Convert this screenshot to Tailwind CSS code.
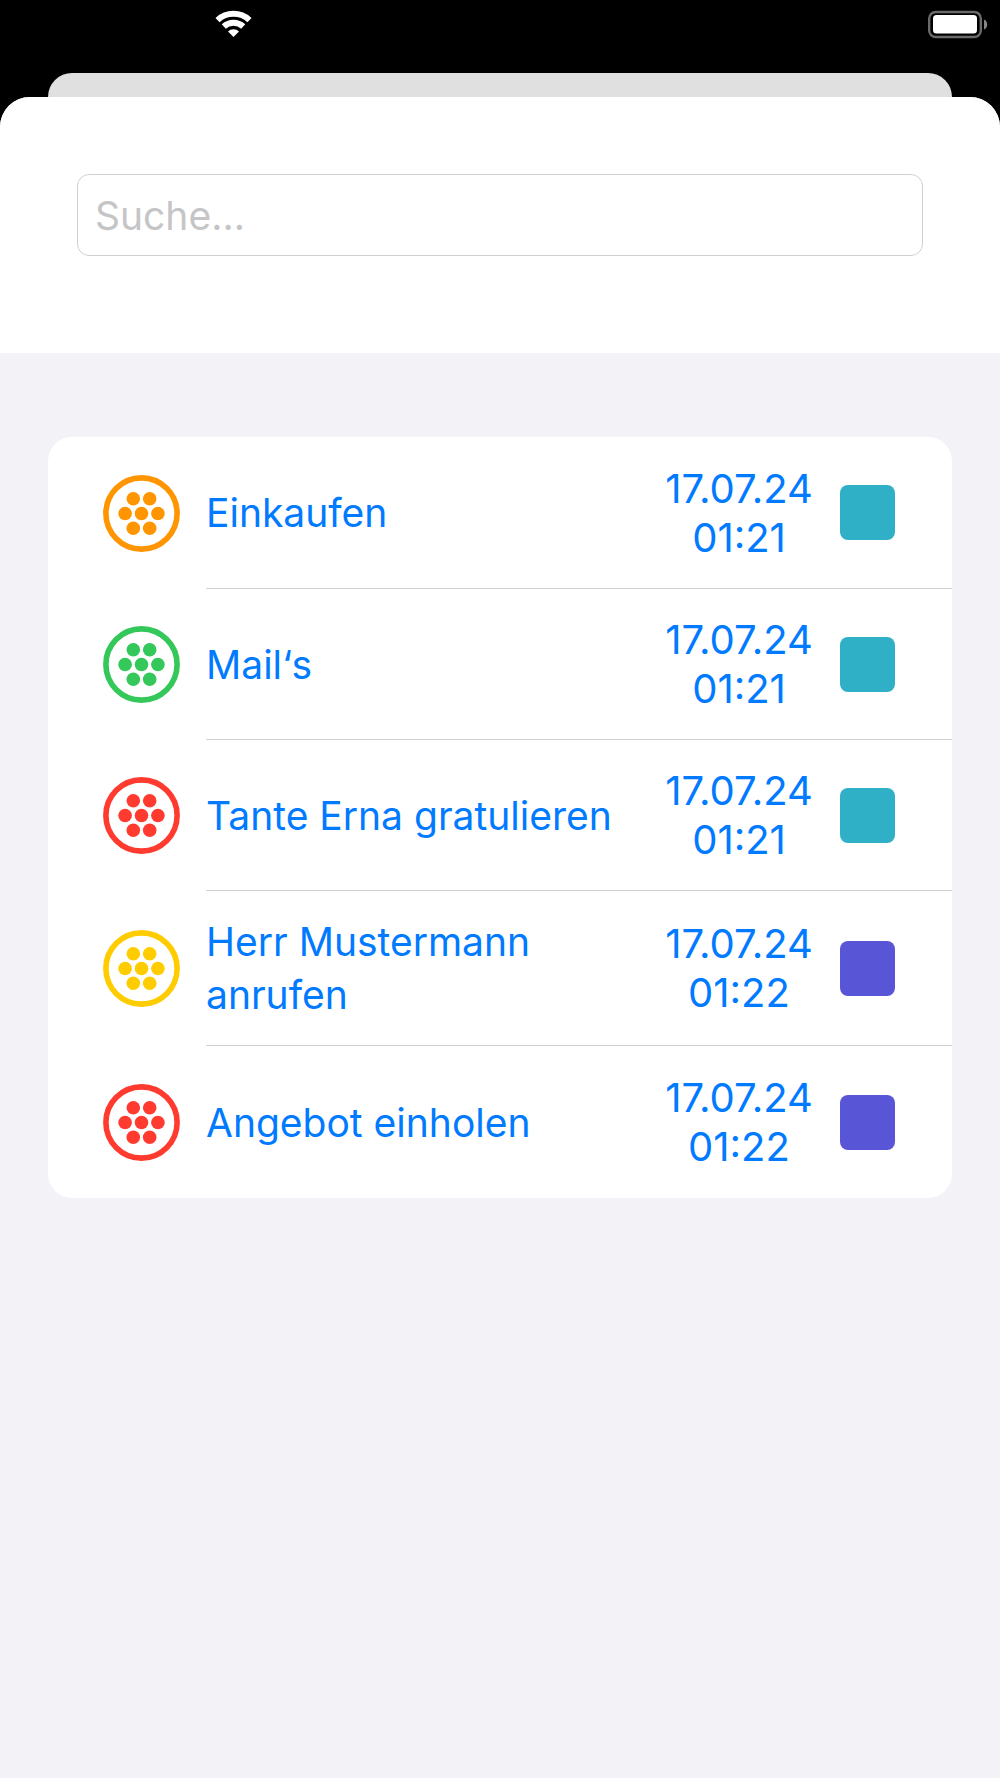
<!DOCTYPE html>
<html lang="de">
<head>
    <meta charset="UTF-8">
    <meta name="viewport" content="width=device-width, initial-scale=1.0">
    <title>Suche</title>
    <script src="https://cdn.jsdelivr.net/npm/@tailwindcss/browser@4"></script>
</head>
<body class="min-h-screen flex flex-col bg-black font-['Inter','Liberation_Sans',sans-serif] text-[39px]">

    <!-- dot icon shared by all rows, takes the row's colour -->
    <svg class="hidden">
        <symbol id="dots" viewBox="0 0 77 77">
            <circle cx="38.5" cy="38.5" r="35.6" fill="none" stroke="currentColor" stroke-width="5.6"/>
            <g fill="currentColor">
                <circle cx="30.3" cy="23.7" r="6.8"/>
                <circle cx="46.7" cy="23.7" r="6.8"/>
                <circle cx="22.1" cy="38.5" r="6.8"/>
                <circle cx="38.5" cy="38.5" r="6.8"/>
                <circle cx="54.9" cy="38.5" r="6.8"/>
                <circle cx="30.3" cy="53.3" r="6.8"/>
                <circle cx="46.7" cy="53.3" r="6.8"/>
            </g>
        </symbol>
    </svg>

    <header class="h-[73px] pt-[10px] pl-[215px] pr-3 flex items-start justify-between">
        <svg class="w-[37px] h-[28px]" viewBox="0 0 37 28" role="img" aria-label="WLAN">
            <g fill="none" stroke="#fff" stroke-width="6">
                <path d="M2.5 10.1 A23.5 23.5 0 0 1 34.5 10.1"/>
                <path d="M8.8 16.5 A14.2 14.2 0 0 1 28.2 16.5"/>
            </g>
            <path d="M18.5 27 L13 21.6 A7.6 7.6 0 0 1 24 21.6 Z" fill="#fff"/>
        </svg>
        <svg class="w-[60px] h-[29px]" viewBox="0 0 60 29" role="img" aria-label="Batterie">
            <rect x="1.2" y="2" width="51.6" height="25" rx="6.5" fill="none" stroke="#6a6a6a" stroke-width="2.4"/>
            <rect x="5" y="5" width="44" height="18.6" rx="3.5" fill="#fff"/>
            <path d="M56 9.5 A5.5 5.5 0 0 1 56 19.5 Z" fill="#858585"/>
        </svg>
    </header>

    <div class="h-6 mx-12 bg-[#e0e0e0] rounded-t-3xl"></div>

    <main class="flex-1 flex flex-col bg-[#f2f2f7] rounded-t-[30px]">
        <div class="bg-white rounded-t-[30px] px-[77px] pt-[77px] pb-[97px]">
            <input type="search" aria-label="Suche" placeholder="Suche..." class="block w-full h-[82px] px-[17px] border border-[#d1d1d3] rounded-xl bg-white text-black placeholder:text-[#c5c5c7] outline-none">
        </div>

        <ul class="mx-12 my-[84px] bg-white rounded-3xl text-[#007aff] overflow-hidden">
            <li>
                <button type="button" class="w-full pl-[55px] flex items-stretch gap-[26px] text-left">
                    <svg class="w-[77px] h-[77px] self-center shrink-0 text-[#ff9500]"><use href="#dots"/></svg>
                    <span class="flex-1 min-h-[152px] py-6 pr-[57px] flex items-center gap-[21px] border-b border-[#d1d1d3]">
                        <span class="flex-1 leading-[53px]">Einkaufen</span>
                        <span class="w-[160px] text-center text-[40px] leading-[49px]">17.07.24<br>01:21</span>
                        <span class="size-[55px] rounded-lg bg-[#30b0c7]"></span>
                    </span>
                </button>
            </li>
            <li>
                <button type="button" class="w-full pl-[55px] flex items-stretch gap-[26px] text-left">
                    <svg class="w-[77px] h-[77px] self-center shrink-0 text-[#34c759]"><use href="#dots"/></svg>
                    <span class="flex-1 min-h-[151px] py-6 pr-[57px] flex items-center gap-[21px] border-b border-[#d1d1d3]">
                        <span class="flex-1 leading-[53px]">Mail‘s</span>
                        <span class="w-[160px] text-center text-[40px] leading-[49px]">17.07.24<br>01:21</span>
                        <span class="size-[55px] rounded-lg bg-[#30b0c7]"></span>
                    </span>
                </button>
            </li>
            <li>
                <button type="button" class="w-full pl-[55px] flex items-stretch gap-[26px] text-left">
                    <svg class="w-[77px] h-[77px] self-center shrink-0 text-[#ff3b30]"><use href="#dots"/></svg>
                    <span class="flex-1 min-h-[151px] py-6 pr-[57px] flex items-center gap-[21px] border-b border-[#d1d1d3]">
                        <span class="flex-1 leading-[53px]">Tante Erna gratulieren</span>
                        <span class="w-[160px] text-center text-[40px] leading-[49px]">17.07.24<br>01:21</span>
                        <span class="size-[55px] rounded-lg bg-[#30b0c7]"></span>
                    </span>
                </button>
            </li>
            <li>
                <button type="button" class="w-full pl-[55px] flex items-stretch gap-[26px] text-left">
                    <svg class="w-[77px] h-[77px] self-center shrink-0 text-[#ffcc00]"><use href="#dots"/></svg>
                    <span class="flex-1 min-h-[151px] py-6 pr-[57px] flex items-center gap-[21px] border-b border-[#d1d1d3]">
                        <span class="flex-1 leading-[53px]">Herr Mustermann anrufen</span>
                        <span class="w-[160px] text-center text-[40px] leading-[49px]">17.07.24<br>01:22</span>
                        <span class="size-[55px] rounded-lg bg-[#5856d6]"></span>
                    </span>
                </button>
            </li>
            <li>
                <button type="button" class="w-full pl-[55px] flex items-stretch gap-[26px] text-left">
                    <svg class="w-[77px] h-[77px] self-center shrink-0 text-[#ff3b30]"><use href="#dots"/></svg>
                    <span class="flex-1 min-h-[152px] py-6 pr-[57px] flex items-center gap-[21px]">
                        <span class="flex-1 leading-[53px]">Angebot einholen</span>
                        <span class="w-[160px] text-center text-[40px] leading-[49px]">17.07.24<br>01:22</span>
                        <span class="size-[55px] rounded-lg bg-[#5856d6]"></span>
                    </span>
                </button>
            </li>
        </ul>
    </main>

</body>
</html>
